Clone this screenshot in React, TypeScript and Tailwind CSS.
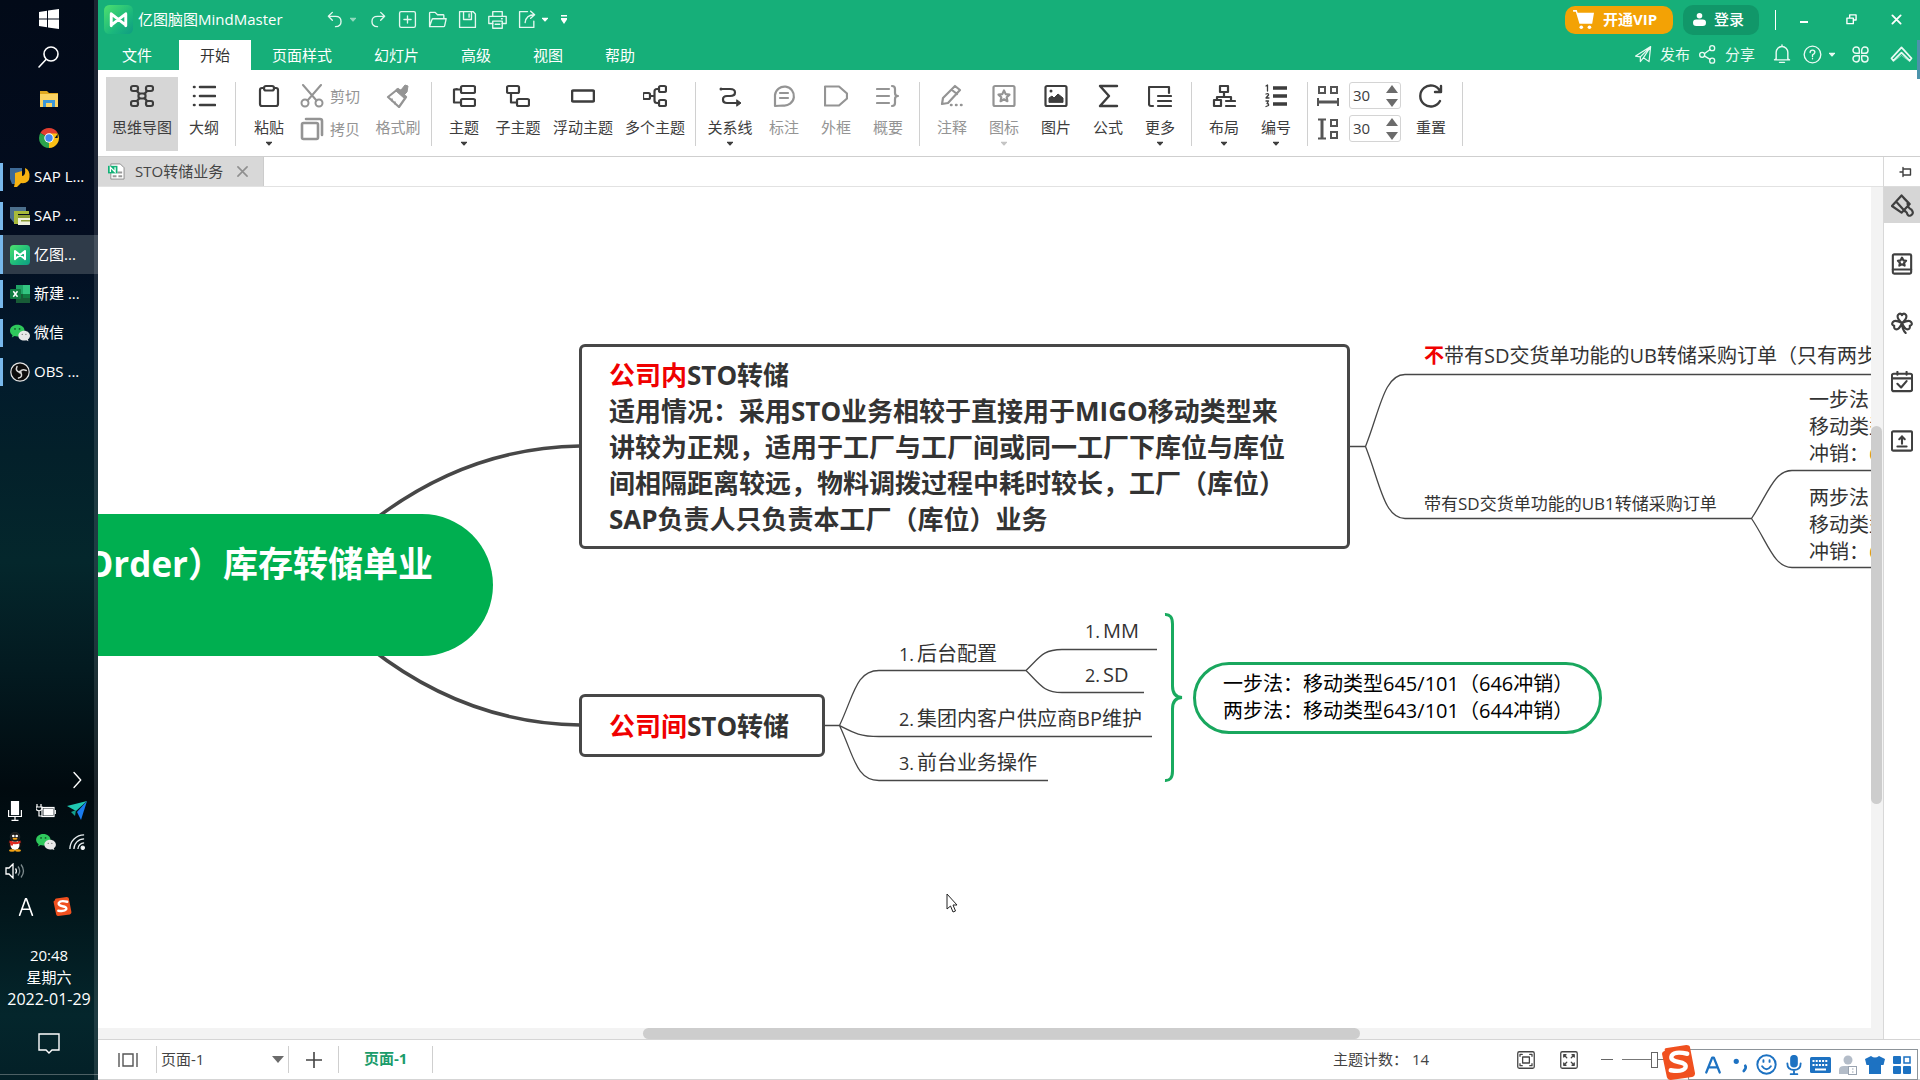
import React from "react";

type P = { children: React.ReactNode; className?: string; box?: string; sw?: number };

function Ico({ children, className = "size-6", box = "0 0 24 24", sw = 2 }: P) {
  return (
    <svg viewBox={box} className={`shrink-0 ${className}`} fill="none" stroke="currentColor" strokeWidth={sw} strokeLinecap="round" strokeLinejoin="round" aria-hidden="true">
      {children}
    </svg>
  );
}

function Caret({ className = "" }: { className?: string }) {
  return (
    <svg viewBox="0 0 8 5" className={`h-[5px] w-2 shrink-0 ${className}`} fill="currentColor" aria-hidden="true">
      <path d="M0 0h8v1L4.500 5h-1L0 1z" />
    </svg>
  );
}

/* ---------- brand marks ---------- */

function MindLogo({ className, id }: { className: string; id: string }) {
  return (
    <svg viewBox="0 0 28 28" className={`shrink-0 ${className}`} aria-hidden="true">
      <defs>
        <linearGradient id={id} x1="0" y1="0" x2="1" y2="1">
          <stop offset="0" stopColor="#4ee06e" />
          <stop offset="0.6" stopColor="#1bb87c" />
          <stop offset="1" stopColor="#0f9c83" />
        </linearGradient>
      </defs>
      <rect width="28" height="28" rx="5" fill={`url(#${id})`} />
      <path d="M7 20V8.500l14 11V8.500L7 19.500M7 9v11M21 9v11" fill="none" stroke="#fff" strokeWidth="2.800" strokeLinejoin="round" strokeLinecap="round" />
    </svg>
  );
}

function SogouLogo({ className }: { className: string }) {
  return (
    <svg viewBox="0 0 36 36" className={`shrink-0 ${className}`} aria-hidden="true">
      <path d="M4 6Q3 3 6 3L26 0Q30 0 30 3L35 29Q35 32 32 33L10 36Q7 36 6 33L1 9Q1 7 4 6z" fill="#f0501f" />
      <path d="M27 9Q14 6 11 11Q9 16 18 17.500Q27 19 25 23.500Q22 28 10 26" fill="none" stroke="#fff" strokeWidth="4.500" strokeLinecap="round" />
    </svg>
  );
}

function WeChat({ className }: { className: string }) {
  return (
    <svg viewBox="0 0 22 20" className={`shrink-0 ${className}`} aria-hidden="true">
      <path d="M8 1C3.500 1 0 3.800 0 7.500c0 2 1 3.700 2.800 4.900L2 15l3-1.600c1 .3 2 .4 3 .4 4.500 0 8-2.800 8-6.400S12.500 1 8 1z" fill="#2fc85c" />
      <circle cx="5.500" cy="5.500" r="1" fill="#145c2c" />
      <circle cx="10.500" cy="5.500" r="1" fill="#145c2c" />
      <path d="M15.500 7.500c-3.600 0-6.300 2.400-6.300 5.400s2.700 5.400 6.300 5.400c.8 0 1.600-.1 2.300-.3L20.300 19l-.6-2c1.400-1 2.300-2.400 2.300-4 0-3.100-2.900-5.500-6.500-5.500z" fill="#e8e8e8" />
      <circle cx="13.500" cy="11.500" r=".8" fill="#777" />
      <circle cx="17.500" cy="11.500" r=".8" fill="#777" />
    </svg>
  );
}

/* ---------- desktop taskbar ---------- */

const tasks: { label: string; active?: boolean; icon: React.ReactNode }[] = [
  {
    label: "SAP L...",
    icon: (
      <svg viewBox="0 0 20 20" className="size-5 shrink-0" aria-hidden="true">
        <path d="M0 1h12v6H5v10H2L0 12z" fill="#3e6a96" />
        <path d="M5 6l7-2v5q4 0 3-8 5 2 4.500 9Q19 17 11 16l-4 4H4l1-5z" fill="#f7b312" />
      </svg>
    ),
  },
  {
    label: "SAP ...",
    icon: (
      <svg viewBox="0 0 20 20" className="size-5 shrink-0" aria-hidden="true">
        <path d="M0 1h16v4H5v13L0 12z" fill="#4c6f8c" />
        <path d="M4 5h15v3H8v10H4z" fill="#a7b93a" />
        <path d="M8 9h12v10H8z" fill="#eef0dc" />
        <path d="M8 9h12v3H8zM11 14h9v1.500h-9z" fill="#8b9c34" />
      </svg>
    ),
  },
  { label: "亿图...", active: true, icon: <MindLogo className="size-5" id="mmTask" /> },
  {
    label: "新建 ...",
    icon: (
      <svg viewBox="0 0 20 18" className="size-5 shrink-0" aria-hidden="true">
        <path d="M6 0h7v9H6z" fill="#21a366" />
        <path d="M13 0h7v9h-7z" fill="#33c481" />
        <path d="M6 9h14v9H6z" fill="#185c37" />
        <path d="M13 9h7v4h-7z" fill="#107c41" />
        <rect y="4" width="11" height="10" rx="1" fill="#107c41" />
        <path d="M3.300 6.300l4.200 5.400M7.500 6.300l-4.200 5.400" stroke="#fff" strokeWidth="1.500" />
      </svg>
    ),
  },
  { label: "微信", icon: <WeChat className="size-5" /> },
  {
    label: "OBS ...",
    icon: (
      <svg viewBox="0 0 20 20" className="size-5 shrink-0" fill="none" aria-hidden="true">
        <circle cx="10" cy="10" r="9.200" fill="#0d0d0d" stroke="#e4e4e4" strokeWidth="1.200" />
        <path d="M7 4.500q-2 4.500 2.500 5.500M16.300 8.500q-4.800-2-6.300 1.500M8.500 16q5-1 2-6" stroke="#d8d8d8" strokeWidth="1.500" strokeLinecap="round" />
        <circle cx="10" cy="10" r="1.500" fill="#d8d8d8" />
      </svg>
    ),
  },
];

function Taskbar() {
  return (
    <aside className="relative flex w-[98px] shrink-0 flex-col bg-[linear-gradient(180deg,#020a18_0%,#030d20_22%,#021a2c_33%,#03202a_42%,#04272c_52%,#031a20_62%,#010a0f_73%,#02161b_84%,#04262c_94%,#032027_100%)] text-white">
      <div className="pointer-events-none absolute inset-y-0 right-0 w-1 bg-[#ffffff1c]" />
      <div className="flex h-[157px] flex-col items-center">
        <button aria-label="开始菜单" className="flex h-[38px] items-center">
          <svg viewBox="0 0 20 20" className="size-5" fill="#fff" aria-hidden="true">
            <path d="M0 3l8-1.200V9.500H0zM9 1.600L20 0v9.500H9zM0 10.500h8v7.700L0 17zM9 10.500h11V20L9 18.400z" />
          </svg>
        </button>
        <button aria-label="搜索" className="flex h-[38px] items-center">
          <Ico className="size-6" sw={1.6}><circle cx="14" cy="9" r="7" /><path d="M9 14.500L2 22" /></Ico>
        </button>
        <button aria-label="文件资源管理器" className="flex h-[46px] items-center">
          <svg viewBox="0 0 20 18" className="h-[18px] w-5" aria-hidden="true">
            <path d="M1 1h7l2 2h9v3H1z" fill="#e0a81f" />
            <path d="M1 4h18v13H1z" fill="#fcd462" />
            <path d="M4 17V10h12v7h-3v-4H7v4z" fill="#3d97d8" />
          </svg>
        </button>
        <button aria-label="Chrome" className="flex h-8 items-center">
          <svg viewBox="0 0 20 20" className="size-5" aria-hidden="true">
            <path d="M10 10L1.340 5A10 10 0 0 1 18.660 5z" fill="#e23e30" />
            <path d="M10 10h8.660V5A10 10 0 0 1 10 20z" fill="#fbc116" />
            <path d="M10 10v10A10 10 0 0 1 1.340 5z" fill="#2ba24c" />
            <path d="M10 5.500h9L14 12.500z" fill="#fbc116" />
            <circle cx="10" cy="10" r="4.700" fill="#fff" />
            <circle cx="10" cy="10" r="3.700" fill="#4286f0" />
          </svg>
        </button>
      </div>
      <nav className="flex flex-col" aria-label="任务">
        {tasks.map((t) => (
          <button key={t.label} className={`flex h-[39px] items-center text-left text-[15px] ${t.active ? "bg-[#2f3b49]" : ""}`}>
            <span className={`w-[3px] bg-[#78b8ec] ${t.active ? "h-full" : "h-7"}`} />
            <span className="ml-[7px] mr-1">{t.icon}</span>
            <span className="whitespace-nowrap">{t.label}</span>
          </button>
        ))}
      </nav>

      <div className="mt-auto flex flex-col">
        <button aria-label="显示隐藏的图标" className="mr-3 self-end">
          <Ico className="size-[18px]" sw={1.8}><path d="M8 2l9 10-9 10" /></Ico>
        </button>
        <div className="mt-1.5 grid grid-cols-3 items-center justify-items-center pr-1.5">
          <div className="flex h-[31px] items-center">
            <svg viewBox="0 0 14 20" className="h-5 w-3.5" fill="none" stroke="#fff" strokeWidth="1.200" aria-hidden="true">
              <rect x="3.500" y=".5" width="7" height="13" fill="#fff" /><path d="M.6 9v6.500h12.800V9M7 16v3M3.500 19.300h7" />
            </svg>
          </div>
          <svg viewBox="0 0 20 14" className="h-3.5 w-5" fill="none" stroke="#fff" strokeWidth="1.200" aria-hidden="true">
            <path d="M1 0v3M5 0v3M0 3h6v2.500L3 7 0 5.500zM3 7v5h3" /><rect x="6" y="3.500" width="12" height="9" /><path d="M8 5h8.500v6H8z" fill="#fff" /><path d="M19.300 6v4" />
          </svg>
          <svg viewBox="0 0 20 20" className="size-5" aria-hidden="true">
            <path d="M0 5L20 0 9 10z" fill="#20c9b2" /><path d="M20 0l-6 19-4-8z" fill="#1a7cf0" /><path d="M4 11l5-2-1 6z" fill="#12a18d" />
          </svg>
          <div className="flex h-[31px] items-center">
            <svg viewBox="0 0 16 20" className="h-5 w-4" aria-hidden="true">
              <ellipse cx="8" cy="12" rx="7" ry="6" fill="#111" /><ellipse cx="8" cy="13" rx="4.500" ry="5" fill="#fff" />
              <ellipse cx="8" cy="5" rx="4.800" ry="4.800" fill="#1b1b1b" stroke="#444" strokeWidth=".4" /><circle cx="6.300" cy="4" r="1.300" fill="#fff" /><circle cx="9.700" cy="4" r="1.300" fill="#fff" />
              <ellipse cx="8" cy="6.800" rx="2.500" ry="1" fill="#f5a313" /><path d="M2.500 8.500q5.500 3 11 0v2.500q-5.500 2.500-11 0z" fill="#e02b22" /><path d="M3.500 9.500h2.500v4H3.500z" fill="#e02b22" />
              <ellipse cx="5" cy="18.500" rx="3" ry="1.300" fill="#f5a313" /><ellipse cx="11" cy="18.500" rx="3" ry="1.300" fill="#f5a313" />
            </svg>
          </div>
          <WeChat className="h-[18px] w-5" />
          <svg viewBox="0 0 18 18" className="size-4" fill="none" stroke="#e8eef0" strokeWidth="1.500" aria-hidden="true">
            <path d="M1 17A16 16 0 0 1 17 1M5.500 17A11.500 11.500 0 0 1 17 5.500M10 17a7 7 0 0 1 7-7" /><circle cx="15.500" cy="15.500" r="1.800" fill="#fff" />
          </svg>
          <div className="flex h-[28px] items-center">
            <svg viewBox="0 0 20 16" className="h-4 w-5" fill="none" stroke="#fff" strokeWidth="1.300" aria-hidden="true">
              <path d="M1 5h3l4-4v14l-4-4H1zM10.500 5.500q1.800 2.500 0 5" /><path d="M13 3.500q3.500 4.500 0 9M16 1.500q5 6.500 0 13" stroke="#7d8a8d" />
            </svg>
          </div>
        </div>
        <div className="mt-3 flex items-center gap-[18px] pl-[17px]">
          <Ico className="size-[18px]" sw={2.2}><path d="M3.500 23L11.500 1h1L20.500 23M6.500 15h11" /></Ico>
          <SogouLogo className="size-[19px]" />
        </div>
        <div className="mt-7 flex flex-col items-center text-[15px] leading-[22px]">
          <span>20:48</span>
          <span>星期六</span>
          <span className="text-base leading-[22px]">2022-01-29</span>
        </div>
        <button aria-label="通知" className="mt-[23px] flex h-[22px] justify-center">
          <svg viewBox="0 0 22 21" className="h-[21px] w-[22px]" fill="none" stroke="#fff" strokeWidth="1.400" aria-hidden="true">
            <path d="M1 1h20v16h-7l-3 3-3-3H1z" />
          </svg>
        </button>
        <div className="mb-[5px] mt-[19px] h-px bg-[#4d6064]" />
      </div>
    </aside>
  );
}

/* ---------- title bar and ribbon tabs ---------- */

const quick: { label: string; node: React.ReactNode; caret?: boolean; dim?: boolean }[] = [
  { label: "撤销", caret: true, dim: true, node: <path d="M8 3L3 8l5 5M3 8h9q7 0 7 6.500T12 21" /> },
  { label: "重做", node: <path d="M16 3l5 5-5 5M21 8h-9q-7 0-7 6.500T12 21" /> },
  { label: "新建", node: <><rect x="2" y="2" width="20" height="20" rx="2" /><path d="M12 7.500v9M7.500 12h9" /></> },
  { label: "打开", node: <path d="M2 21V4q0-1 1-1h6l3 3h7q1 0 1 1v4M2 21l3-9q.3-1 1.500-1H23l-2 9q-.3 1-1.500 1z" /> },
  { label: "保存", node: <><path d="M2 2h17l3 3v17H2z" /><path d="M7 2v10h10V2M14 5v4" /></> },
  { label: "打印", node: <><path d="M6 7V2h12v5M6 17H1V8h22v9h-5M17 11h1" /><path d="M6 14h12v9H6zM9 18h6" /></> },
  { label: "导出", caret: true, node: <><path d="M12 2H2v20h18v-8" /><path d="M9 16q1-10 12-10M16 1.500l5 4.500-5 4.500" /></> },
];

const menus = ["文件", "开始", "页面样式", "幻灯片", "高级", "视图", "帮助"];

function Header() {
  return (
    <header className="relative bg-[#16af79] text-[15px] text-white">
      <div className="flex h-10 items-center pb-px pl-1.5">
        <MindLogo className="size-[29px]" id="mmTitle" />
        <h1 className="ml-[5px] w-[182px] whitespace-nowrap">亿图脑图MindMaster</h1>
        <div className="flex items-center">
          {quick.map((q) => (
            <React.Fragment key={q.label}>
              <button aria-label={q.label} className="flex w-[30px] justify-center text-[#e4f8ef]">
                <Ico className="size-[19px]" sw={1.7}>{q.node}</Ico>
              </button>
              {q.caret && <Caret className={q.dim ? "mr-1.5 !w-1.5 text-[#8fd9bd]" : "!w-1.5"} />}
            </React.Fragment>
          ))}
          <button aria-label="自定义" className="ml-3">
            <svg viewBox="0 0 8 9" className="h-[9px] w-2" fill="#fff" aria-hidden="true"><path d="M1 0h6v1.500H1zM1 3h6v1.500L4 9 1 4.500z" /></svg>
          </button>
        </div>
        <div className="ml-auto flex items-center">
          <button className="flex h-7 w-[108px] items-center rounded-[10px] bg-[#f3a205] pl-2 font-bold">
            <svg viewBox="0 0 24 22" className="mr-2 h-5 w-[22px]" fill="#fff" aria-hidden="true">
              <path d="M0 0h4l1 3h18l-2 12H7L3 2H0z" /><circle cx="9" cy="19" r="2" /><circle cx="18" cy="19" r="2" />
            </svg>
            开通VIP
          </button>
          <button className="ml-2.5 flex h-[30px] w-[76px] items-center rounded-[10px] bg-[#119769] pl-2.5">
            <svg viewBox="0 0 14 14" className="mr-2 size-[13px]" fill="#fff" aria-hidden="true"><circle cx="7" cy="3" r="3" /><rect y="7" width="14" height="7" rx="3.500" /></svg>
            <span className="font-medium">登录</span>
          </button>
          <div className="ml-4 h-5 w-px bg-white" />
          <button aria-label="最小化" className="ml-6 flex h-6 w-2 items-center"><span className="mt-1 h-0.5 w-2 bg-white" /></button>
          <button aria-label="还原" className="ml-[38px]">
            <Ico className="size-[11px]" sw={3}><path d="M8 7V2h14v11h-5" /><path d="M2 9h14v12H2z" /></Ico>
          </button>
          <button aria-label="关闭" className="ml-[34px] mr-[18px]">
            <Ico className="size-[11px]" sw={4}><path d="M3 3l18 18M21 3L3 21" /></Ico>
          </button>
        </div>
      </div>
      <div className="flex h-[30px]">
        <nav className="flex gap-0 pl-[3px]" aria-label="功能区">
          {menus.map((m) => (
            <button key={m} className={`whitespace-nowrap px-[21px] first:mr-1.5 ${m === "开始" ? "bg-white text-[#333]" : ""}`}>{m}</button>
          ))}
        </nav>
        <div className="ml-auto flex items-center pb-0.5 pr-[7px] text-[#e9faf3]">
          <button className="flex items-center">
            <Ico className="mr-[7px] size-[19px]" sw={1.5}><path d="M2 14L21 2l-2 19-7-5-4 5v-6zM8 15L21 2l-9 14" /></Ico>
            发布
          </button>
          <button className="ml-2 flex items-center">
            <Ico className="mr-[7px] size-5" sw={1.6}><circle cx="5" cy="13" r="3" /><circle cx="17" cy="5" r="3" /><circle cx="17" cy="20" r="3" /><path d="M8 11.500L14.500 6.500M8 14.500l6.500 4" /></Ico>
            分享
          </button>
          <button aria-label="消息" className="ml-[17px]"><Ico className="size-5" sw={1.7}><path d="M5 18V10a7 7 0 0 1 14 0v8l2 1H3zM12 1v2M9 22h6" /></Ico></button>
          <button aria-label="帮助菜单" className="ml-[11px] flex items-center">
            <Ico className="mr-[7px] size-[19px]" sw={1.7}><circle cx="12" cy="12" r="10.500" /><path d="M9 9.500q0-3 3-3t3 2.800q0 1.700-3 3.200v2M12 17v.5" /></Ico>
            <Caret className="!w-1.5" />
          </button>
          <button aria-label="应用" className="ml-4"><Ico className="size-[19px]" sw={1.8}><path d="M10.500 10.500H6.500a4 4 0 1 1 4-4zM13.500 10.500v-4a4 4 0 1 1 4 4zM10.500 13.500v4a4 4 0 1 1-4-4zM13.500 13.500h4a4 4 0 1 1-4 4z" /></Ico></button>
          <button aria-label="收起功能区" className="ml-5"><Ico className="size-[23px]" sw={1.8}><path d="M1.500 16L12 4.500 22.500 16l-2 2.500L12 10l-8.500 8.500z" /><path d="M4 19l8-6 8 6" strokeWidth="1" opacity=".5" /></Ico></button>
        </div>
      </div>
      <div className="absolute right-0 top-10 h-[39px] w-[3px] bg-[#4c93ab]" />
    </header>
  );
}

/* ---------- ribbon ---------- */

function Tool({ label, w, children, caret, dim, active }: { label: string; w: string; children: React.ReactNode; caret?: boolean; dim?: boolean; active?: boolean }) {
  return (
    <button className={`flex h-[74px] shrink-0 flex-col items-center pt-[7px] ${w} ${active ? "bg-[#d6d6d6]" : ""} ${dim ? "text-[#949494]" : "text-[#3d3d3d]"}`}>
      <Ico sw={2.2}>{children}</Ico>
      <span className="mt-[9px] whitespace-nowrap leading-5">{label}</span>
      {caret && <Caret className={`mt-1 !w-1.5 ${dim ? "text-[#c4c4c4]" : ""}`} />}
    </button>
  );
}

function Sep() {
  return <div className="ml-[5px] mr-1.5 mt-[5px] h-16 w-px shrink-0 bg-[#d0d0d0]" />;
}

function Spacing({ label, children }: { label: string; children: React.ReactNode }) {
  return (
    <div className="flex items-center">
      <svg viewBox="0 0 22 22" className="mr-2.5 h-[22px] w-[22px]" fill="none" stroke="#555" strokeWidth="2" aria-hidden="true">{children}</svg>
      <div className="flex h-[27px] w-[52px] items-center rounded-[3px] border border-[#d4d4d4]">
        <input aria-label={label} defaultValue="30" className="w-9 bg-transparent pl-[3px] text-[15px] text-[#3d3d3d] outline-none" />
        <div className="flex flex-col gap-1.5">
          <button aria-label={`${label}增加`} className="flex h-2"><svg viewBox="0 0 12 8" className="h-2 w-3" fill="#6b6b6b" aria-hidden="true"><path d="M6 0l6 8H0z" /></svg></button>
          <button aria-label={`${label}减少`} className="flex h-2"><svg viewBox="0 0 12 8" className="h-2 w-3" fill="#6b6b6b" aria-hidden="true"><path d="M6 8L0 0h12z" /></svg></button>
        </div>
      </div>
    </div>
  );
}

function Ribbon() {
  return (
    <div className="flex h-[87px] border-b border-[#cfcfcf] bg-white pl-2 pt-[7px] text-[15px]">
      <Tool label="思维导图" w="w-[72px]" active>
        <rect x="1" y="2" width="7" height="5" rx="2" /><rect x="16" y="2" width="7" height="5" rx="2" /><rect x="8.500" y="9.500" width="7" height="5" rx="2" /><rect x="1" y="17" width="7" height="5" rx="2" /><rect x="16" y="17" width="7" height="5" rx="2" />
        <path d="M7 7l2.500 3M17 7l-2.500 3M7 17l2.500-3M17 17l-2.500-3" />
      </Tool>
      <Tool label="大纲" w="w-[52px]"><path d="M8 3h15M8 12h15M8 21h15M2 3h.5M2 12h.5M2 21h.5" strokeWidth="2.600" /></Tool>
      <Sep />
      <Tool label="粘贴" w="w-[54px]" caret><path d="M7 4H5Q3 4 3 6v14q0 2 2 2h14q2 0 2-2V6q0-2-2-2h-2" /><rect x="7" y="2" width="10" height="4.500" rx="2" /></Tool>
      <div className="flex w-[74px] shrink-0 flex-col gap-[9px] pl-1 pt-[7px] text-[#949494]">
        <button className="flex h-6 items-center gap-1.5 whitespace-nowrap">
          <Ico sw={2}><circle cx="5" cy="19" r="3.500" /><circle cx="19" cy="19" r="3.500" /><path d="M3 1l13.500 15.500M21 1L7.500 16.500" /></Ico>剪切
        </button>
        <button className="flex h-6 items-center gap-1.5 whitespace-nowrap">
          <Ico sw={2.6}><rect x="2" y="6" width="16" height="16" rx="1.500" /><path d="M6 2h14q2 0 2 2v14" /></Ico>拷贝
        </button>
      </div>
      <Tool label="格式刷" w="w-14" dim>
        <path d="M2 13L12 5l8 8-7 10z" fill="none" /><path d="M11 5l4 1 4-5 3 1-1 6-3 3 2 2-1 2-9-8z" fill="currentColor" strokeWidth="1" /><path d="M6 15v2M9 18v2" strokeWidth="1.500" />
      </Tool>
      <Sep />
      <Tool label="主题" w="w-[52px]" caret><rect x="9" y="2" width="14" height="7" rx="1.500" /><rect x="9" y="15" width="14" height="7" rx="1.500" /><path d="M9 5.500H2v13h7M2 5.500L5 5" /></Tool>
      <Tool label="子主题" w="w-14"><rect x="1" y="2" width="12" height="7" rx="1.500" /><rect x="11" y="15" width="12" height="7" rx="1.500" /><path d="M5 9v9.500h6" /></Tool>
      <Tool label="浮动主题" w="w-[74px]"><rect x="1" y="6.500" width="22" height="11" rx="1.500" strokeWidth="2.600" /></Tool>
      <Tool label="多个主题" w="w-[70px]"><rect x="0" y="9" width="7" height="6" rx="1.500" /><rect x="16" y="2" width="7" height="6" rx="1.500" /><rect x="16" y="16" width="7" height="6" rx="1.500" /><path d="M7 12h4.500M16 5h-2q-2.500 0-2.500 2.500v9q0 2.500 2.500 2.500h2" /></Tool>
      <Sep />
      <Tool label="关系线" w="w-14" caret><path d="M3 5h9q5 0 5 3.500T12 12H9q-4 0-4 3.500T9 19h9" /><circle cx="3" cy="5" r="1.500" fill="currentColor" stroke="none" /><path d="M19 16l4 3-4 3z" fill="currentColor" strokeWidth="1" /></Tool>
      <Tool label="标注" w="w-[52px]" dim><path d="M3 22V11a9.500 9.500 0 1 1 8 10.500zM8 9h8M8 14h8" /></Tool>
      <Tool label="外框" w="w-[52px]" dim><path d="M1 2.500h14l8 7v5l-8 7H1z" /></Tool>
      <Tool label="概要" w="w-[52px]" dim><path d="M1 5h12M1 12h12M1 19h12M16 2q3 0 3 3v4q0 3 3 3-3 0-3 3v4q0 3-3 3" /></Tool>
      <Sep />
      <Tool label="注释" w="w-[52px]" dim><path d="M2 20l1-6L15 2l5 4L8 19zM12 6l5 4" /><path d="M11 21h.5M16 21h.5M21 21h.5" strokeWidth="2.500" /></Tool>
      <Tool label="图标" w="w-[52px]" dim caret><rect x="1.500" y="2" width="21" height="20" rx="1.500" /><path d="M12 6.500l1.700 3.600 3.800.5-2.800 2.700.7 3.900L12 15.300l-3.400 1.900.7-3.900-2.800-2.700 3.800-.5z" /></Tool>
      <Tool label="图片" w="w-[52px]"><rect x="1.500" y="2" width="21" height="20" rx="1.500" /><path d="M5 18v-4l3-2 2 2 4-4 5 4v4z" fill="currentColor" strokeWidth="1" /><circle cx="7" cy="7" r="1.500" fill="currentColor" stroke="none" /></Tool>
      <Tool label="公式" w="w-[52px]"><path d="M21 2H4l9 10-9 10h17" strokeWidth="2.400" /></Tool>
      <Tool label="更多" w="w-[52px]" caret><path d="M5 22H3q-2 0-2-2V3h20v6M10 12h13M10 17h13M10 22h13" /></Tool>
      <Sep />
      <Tool label="布局" w="w-[52px]" caret><rect x="8" y="2" width="8" height="6" /><path d="M12 8v5M5 16v-3h14v3M14 17h9M14 22h9" /><rect x="2" y="16" width="7" height="6" /></Tool>
      <Tool label="编号" w="w-[52px]" caret><path d="M9 4h14M9 12h14M9 20h14" strokeWidth="3.500" strokeLinecap="butt" /><path d="M2 2l1.500-1v6M2 10q3-1 2.500 1L2 14h3M2 17h2.500L3 19.500q2 0 1.500 2L2 22.500" strokeWidth="1.300" /></Tool>
      <Sep />
      <div className="flex shrink-0 flex-col gap-1.5 pl-[3px] pr-1 pt-[5px]">
        <Spacing label="水平间距"><path d="M2 2h6v6H2zM14 2h6v6h-6zM1 13v8M21 13v8" /><path d="M1 17h20" strokeWidth="3" /></Spacing>
        <Spacing label="垂直间距"><path d="M14 2h6v6h-6zM14 14h6v6h-6zM1 1.500h8M1 20.500h8" /><path d="M5 1.500v19" strokeWidth="3" /></Spacing>
      </div>
      <Tool label="重置" w="w-[52px]"><path d="M21 17a10.500 10.500 0 1 1 0-10M22 2v6h-6" strokeWidth="2.400" /></Tool>
      <Sep />
    </div>
  );
}

/* ---------- mind map ---------- */

function Topic({ at, no, children }: { at: string; no?: string; children: React.ReactNode }) {
  return (
    <div className={`absolute flex items-baseline whitespace-nowrap ${at}`}>
      {no && <span className="w-[18px] text-lg leading-[26px]">{no}</span>}
      <span>{children}</span>
    </div>
  );
}

function MindMap() {
  return (
    <section aria-label="画布" className="relative min-w-0 flex-1 overflow-hidden bg-white text-xl leading-[26px] text-[#333]">
      <svg className="absolute left-0 top-0 size-full" fill="none" stroke="#474747" aria-hidden="true">
        <g transform="translate(-98 -187)">
          <path d="M370 523C440 468 510 447 580 446M370 648C440 703 510 724 580 725" strokeWidth="3.500" />
          <g strokeWidth="1.300">
            <path d="M1350 446.500H1365.500C1380 410 1384 374.500 1405 374.500H1880M1365.500 446.500C1380 483 1384 518.500 1405 518.500H1751.500C1768 494 1774 470.500 1792 470.500H1880M1751.500 518.500C1768 543 1774 567.500 1792 567.500H1880" />
            <path d="M824 725.500H839.500C854 695 856 670.500 879 670.500H1026C1040 657 1043 649.500 1062 649.500H1157M1026 670.500C1040 684 1043 692.500 1062 692.500H1144M839.500 725.500C854 733 860 736.500 879 736.500H1152M839.500 725.500C854 756 856 780.500 879 780.500H1048" />
          </g>
          <path d="M1165 614.500Q1172.500 614 1172.500 624V686Q1172.500 697 1182 697.500Q1172.500 698 1172.500 709V771Q1172.500 781 1165 780.500" stroke="#19aa5f" strokeWidth="3" />
        </g>
      </svg>

      <div className="absolute left-[-400px] top-[327px] h-[142px] w-[795px] whitespace-nowrap rounded-full bg-[#00af50] pr-[60px] pt-[25px] text-right text-[35px] font-bold leading-[50px] text-white">
        Order）库存转储单业
      </div>

      <div className="absolute left-[481px] top-[157px] h-[205px] w-[771px] whitespace-nowrap rounded-[6px] border-[3px] border-[#474747] bg-white pl-[27px] pt-2.5 text-[26px] font-bold leading-9">
        <p><span className="text-[#f00000]">公司内</span>STO转储</p>
        <p>适用情况：采用STO业务相较于直接用于MIGO移动类型来</p>
        <p>讲较为正规，适用于工厂与工厂间或同一工厂下库位与库位</p>
        <p>间相隔距离较远，物料调拨过程中耗时较长，工厂（库位）</p>
        <p>SAP负责人只负责本工厂（库位）业务</p>
      </div>

      <div className="absolute left-[481px] top-[507px] flex h-[63px] w-[246px] items-center whitespace-nowrap rounded-[6px] border-[3px] border-[#474747] bg-white pl-[27px] text-[26px] font-bold leading-9">
        <p><span className="text-[#f00000]">公司间</span>STO转储</p>
      </div>

      <Topic at="left-[801px] top-[454px]" no="1.">后台配置</Topic>
      <Topic at="left-[801px] top-[519px]" no="2.">集团内客户供应商BP维护</Topic>
      <Topic at="left-[801px] top-[563px]" no="3.">前台业务操作</Topic>
      <Topic at="left-[987px] top-[431px]" no="1.">MM</Topic>
      <Topic at="left-[987px] top-[475px]" no="2.">SD</Topic>

      <div className="absolute left-[1095px] top-[475px] w-[409px] whitespace-nowrap rounded-full border-[3px] border-[#19a75e] bg-white pb-[7px] pl-[27px] pt-[5px] leading-[27px] text-black">
        <p>一步法：移动类型645/101（646冲销）</p>
        <p>两步法：移动类型643/101（644冲销）</p>
      </div>

      <Topic at="left-[1326px] top-[156px]"><b className="text-[#f00000]">不</b>带有SD交货单功能的UB转储采购订单（只有两步法）</Topic>
      <Topic at="left-[1326px] top-[304px] text-[17px]">带有SD交货单功能的UB1转储采购订单</Topic>
      <div className="absolute left-[1711px] top-[199px] whitespace-nowrap leading-[27px]">
        <p>一步法</p><p>移动类型</p><p>冲销：<span className="text-[#c98a1b]">6</span></p>
      </div>
      <div className="absolute left-[1711px] top-[297px] whitespace-nowrap leading-[27px]">
        <p>两步法</p><p>移动类型</p><p>冲销：<span className="text-[#c98a1b]">6</span></p>
      </div>

      <svg viewBox="0 0 12 20" className="absolute left-[848px] top-[706px] h-5 w-3" aria-hidden="true">
        <path d="M1 1v15l3.500-3 2.500 6 2.500-1-2.500-6H11z" fill="#fff" stroke="#222" strokeWidth="1" />
      </svg>
    </section>
  );
}

/* ---------- side panel ---------- */

function SideBar() {
  const items: [string, React.ReactNode][] = [
    ["图鉴", <><rect x="2" y="1.500" width="20" height="21" rx="1.500" /><path d="M2 18h20M12 5l1.500 3 3 .4-2.200 2.200.6 3.200L12 12.300l-2.900 1.500.6-3.200-2.200-2.200 3-.4z" /></>],
    ["剪贴画", <path d="M12 12Q6 7 7.500 3.500 10 0 12 3.500 14 0 16.500 3.500 18 7 12 12zM12 12Q4 8 2 11q-2 3 1.500 4Q3 19 6 19t6-7zM12 12q8-4 10-1 2 3-1.500 4 .5 4-2.500 4t-6-7zM12 12q0 7 4 11" />],
    ["任务", <><rect x="1" y="3" width="22" height="19" rx="2" /><path d="M1 8h22M7 1v3M17 1v3M7 14l4 4 6-7" /></>],
    ["导出面板", <><rect x="1" y="1.500" width="22" height="21" rx="1.500" /><path d="M7 18h10M12 15V7M9 10l3-3 3 3" /></>],
  ];
  return (
    <aside className="flex w-[37px] shrink-0 flex-col border-l border-[#d8d8d8] bg-white text-[#3f3f3f]">
      <button aria-label="固定" className="flex h-[30px] shrink-0 items-center justify-center border-b border-[#dcdcdc] pl-1.5">
        <Ico className="h-3 w-[13px]" sw={2.8}><path d="M1 12h6M7 3v18M7 6h15v12H7" /></Ico>
      </button>
      <button aria-label="格式" className="flex h-9 items-center justify-center bg-[#d6d6d6]">
        <Ico className="size-[23px]" sw={2.3}><path d="M1 12.500L11 1.500l8.500 9-8.500 9zM5.500 8l9 10M13.500 4.500l4 4q-1 5 4 8 3 4-1 6-3 1-4-3l-3-3" /></Ico>
      </button>
      <div className="mt-[29px] flex flex-col items-center gap-[35px]">
        {items.map(([l, n]) => (
          <button key={l} aria-label={l} className="flex h-6 items-center"><Ico className="size-[22px]" sw={2.3}>{n}</Ico></button>
        ))}
      </div>
    </aside>
  );
}

/* ---------- status bar ---------- */

function StatusBar() {
  return (
    <footer className="flex h-[41px] shrink-0 items-center border-y border-[#d5d5d5] bg-white text-[15px] text-[#444]">
      <button aria-label="缩略图" className="ml-5">
        <svg viewBox="0 0 20 14" className="h-3.5 w-5" fill="none" stroke="#555" strokeWidth="1.400" aria-hidden="true"><path d="M1 0v14M19 0v14M5 1h10v12H5z" /></svg>
      </button>
      <div className="relative ml-[18px] flex h-[27px] w-[133px] items-center border-x border-[#cfcfcf]">
        <select aria-label="页面" className="w-full appearance-none bg-transparent pl-1 outline-none"><option>页面-1</option></select>
        <svg viewBox="0 0 12 7" className="pointer-events-none absolute right-1 h-[7px] w-3" fill="#6b6b6b" aria-hidden="true"><path d="M0 0h12L6 7z" /></svg>
      </div>
      <button aria-label="添加页面" className="flex h-[27px] w-[50px] items-center justify-center border-r border-[#cfcfcf]">
        <Ico className="size-4" sw={2.4}><path d="M12 0v24M0 12h24" /></Ico>
      </button>
      <button className="h-[27px] border-r border-[#cfcfcf] px-[25px] pb-0.5 font-bold text-[#1b9c6b]">页面-1</button>
      <span className="ml-auto flex w-[180px] gap-1">主题计数：<span>14</span></span>
      <button aria-label="适应窗口" className="ml-1">
        <Ico className="size-[18px]" sw={1.7}><rect x="1" y="1" width="22" height="22" rx="2" /><rect x="7.500" y="8" width="9" height="8" /><path d="M4 7V4.500h3M17 4.500h3V7M20 17v2.500h-3M7 19.500H4V17" /></Ico>
      </button>
      <button aria-label="全屏" className="ml-[25px]">
        <Ico className="size-[18px]" sw={1.7}><rect x="1" y="1" width="22" height="22" rx="2" /><path d="M5 8V5h3M5 5l4 4M16 5h3v3M19 5l-4 4M19 16v3h-3M19 19l-4-4M8 19H5v-3M5 19l4-4" /></Ico>
      </button>
      <button aria-label="缩小" className="ml-[23px] h-px w-3 bg-[#666]" />
      <input
        type="range" aria-label="缩放" defaultValue={32}
        className="ml-[9px] mr-[200px] h-4 w-[98px] appearance-none bg-[linear-gradient(#777,#777)] bg-[length:100%_1px] bg-center bg-no-repeat [&::-webkit-slider-thumb]:h-4 [&::-webkit-slider-thumb]:w-[7px] [&::-webkit-slider-thumb]:appearance-none [&::-webkit-slider-thumb]:border [&::-webkit-slider-thumb]:border-[#666] [&::-webkit-slider-thumb]:bg-white"
      />
    </footer>
  );
}

function ImeBar() {
  return (
    <div className="absolute bottom-0 right-0.5 flex items-end">
      <SogouLogo className="relative z-10 -mr-2 size-[35px]" />
      <div className="flex h-[31px] items-center border border-[#8d9499] bg-white pl-2.5 pr-0.5 text-[#1d72c2]">
        <div className="grid grid-cols-[repeat(8,27px)] items-center justify-items-center">
          <Ico className="size-[18px]" sw={3}><path d="M3 22L11 2h2l8 20M6 15h12" /></Ico>
          <Ico className="size-[18px]" sw={2}><circle cx="7" cy="7" r="2.500" fill="currentColor" /><path d="M19 13q2 3-2 7" strokeWidth="3.500" /></Ico>
          <Ico className="size-[21px]" sw={2.2}><circle cx="12" cy="12" r="10.500" /><path d="M7 14q5 7 10 0M8.500 7v2M15.500 7v2" /></Ico>
          <Ico className="size-[20px]" sw={2.2}><rect x="8.500" y="1" width="7" height="13" rx="3.500" fill="currentColor" /><path d="M4 10q0 8 8 8t8-8M12 18v5M8 23h8" /></Ico>
          <svg viewBox="0 0 21 16" className="h-4 w-[21px]" aria-hidden="true"><rect width="21" height="16" rx="1.500" fill="currentColor" /><path d="M2.500 4h16M2.500 8h16" stroke="#fff" strokeWidth="2" strokeDasharray="2 1.200" /><path d="M5 12.500h11" stroke="#fff" strokeWidth="2" /></svg>
          <svg viewBox="0 0 18 20" className="h-5 w-[18px]" aria-hidden="true"><circle cx="9" cy="5" r="4.500" fill="#b3bcc8" /><path d="M0 19v-4q0-4 5-4h8q5 0 5 4v4z" fill="#b3bcc8" /><rect x="9.500" y="11.500" width="8" height="8" fill="#fff" stroke="#99a3b0" /><path d="M13 14h1.500M13 17h1.500" stroke="#99a3b0" /></svg>
          <svg viewBox="0 0 20 18" className="h-[18px] w-5" fill="currentColor" aria-hidden="true"><path d="M6 0q4 3 8 0l6 3-1.500 6H16v9H4V9H1.500L0 3z" /></svg>
          <svg viewBox="0 0 18 18" className="size-[18px]" fill="currentColor" aria-hidden="true"><rect width="8" height="8" rx="1" /><rect y="10" width="8" height="8" rx="1" /><rect x="10" y="10" width="8" height="8" rx="1" /><rect x="11" y="1" width="6" height="6" fill="#fff" stroke="currentColor" strokeWidth="1.500" /></svg>
        </div>
      </div>
    </div>
  );
}

export default function App() {
  return (
    <div className="relative flex h-screen w-full overflow-hidden bg-white font-['Open_Sans','Noto_Sans_CJK_SC',sans-serif]">
      <Taskbar />
      <main className="flex min-w-0 flex-1 flex-col">
        <Header />
        <Ribbon />
        <div className="flex min-h-0 flex-1">
          <div className="flex min-w-0 flex-1 flex-col">
            <div className="flex h-[30px] shrink-0 border-b border-[#e2e2e2]">
              <div className="flex w-[166px] items-center whitespace-nowrap border-r border-[#ccc] bg-[#d8d8d8] text-[15px] text-[#444]">
                <svg viewBox="0 0 18 18" className="ml-2.5 mr-2.5 size-[17px]" aria-hidden="true">
                  <path d="M3 1h10l4 4v12H3z" fill="#fff" stroke="#8b8b8b" /><path d="M10 9h5v2h-5zM5 13h4v2H5zM11 13h4v2h-4z" fill="#999" />
                  <rect y="3" width="10" height="8" fill="#12b277" /><path d="M2.500 9.500v-5l5 5v-5" stroke="#fff" strokeWidth="1.400" fill="none" />
                </svg>
                STO转储业务
                <button aria-label="关闭标签" className="ml-3.5 text-[#8f8f8f]"><Ico className="size-[11px]" sw={3.5}><path d="M2 2l20 20M22 2L2 22" /></Ico></button>
              </div>
            </div>
            <div className="flex min-h-0 flex-1">
              <MindMap />
              <div className="w-3 shrink-0 bg-[#f3f3f3]"><div className="mt-[239px] h-[378px] w-[11px] rounded-full bg-[#cdcdcd]" /></div>
            </div>
            <div className="h-[11px] shrink-0 bg-[#f3f3f3]"><div className="ml-[545px] h-full w-[717px] rounded-full bg-[#cdcdcd]" /></div>
          </div>
          <SideBar />
        </div>
        <StatusBar />
      </main>
      <ImeBar />
    </div>
  );
}
